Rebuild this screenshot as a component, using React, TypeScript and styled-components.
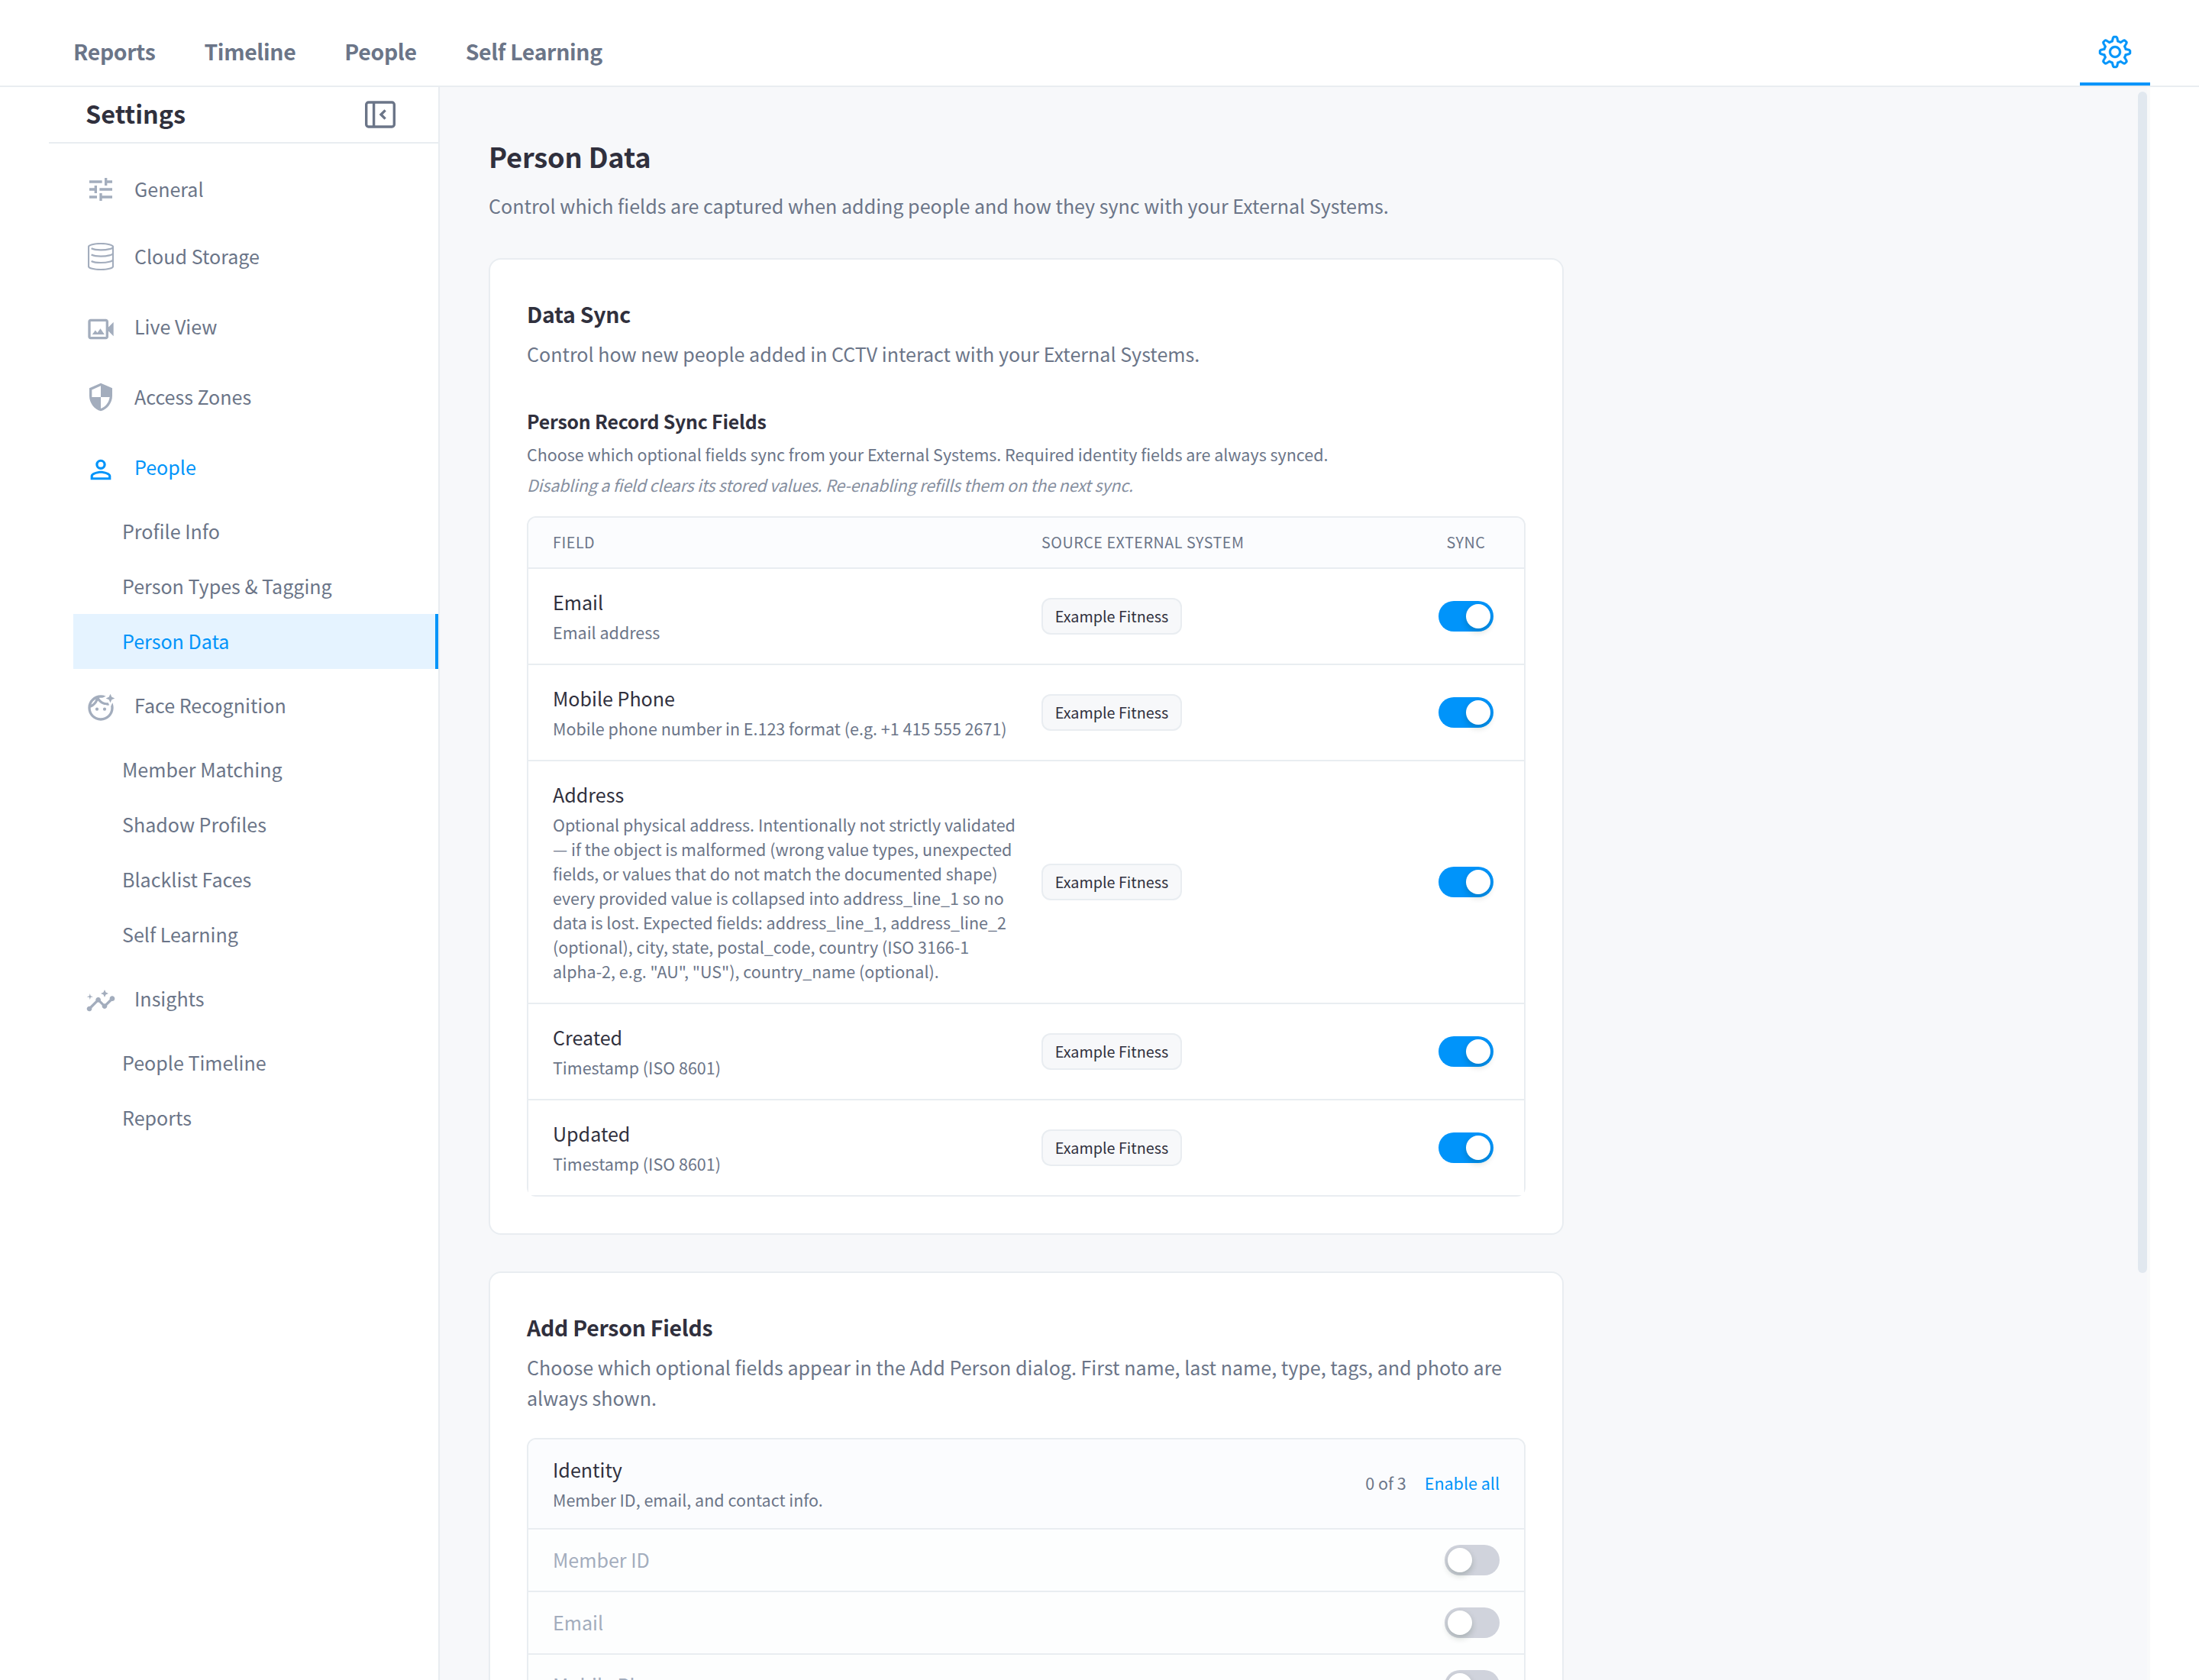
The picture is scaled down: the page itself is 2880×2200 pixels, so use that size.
import { ReactNode, useState } from 'react';
import styled, { createGlobalStyle, css } from 'styled-components'
import {
  MdInsights,
  MdOutlineFaceRetouchingNatural,
  MdPersonOutline,
  MdSecurity,
  MdTune,
} from 'react-icons/md'
import { SlSettings } from 'react-icons/sl'

const color = {
  blue: '#0094fa',
  blueLight: '#e5f3ff',
  title: '#30303d',
  text: '#6b7588',
  muted: '#a3adbd',
  border: '#e9edf1',
  page: '#f7f8fa',
  header: '#fbfcfe',
}

const GlobalStyle = createGlobalStyle`
  * {
    box-sizing: border-box;
  }

  body {
    margin: 0;
    background: #fff;
    color: ${color.text};
    font-family: 'Noto Sans CJK SC', 'Noto Sans', sans-serif;
    font-size: 25.07px;
    line-height: 40px;
  }

  h1, h2, h3, p {
    margin: 0;
  }
`

const Page = styled.div`
  display: flex;
  flex-direction: column;
  height: 2200px;
  overflow: hidden;
`

const TopBar = styled.header`
  display: flex;
  flex: none;
  justify-content: space-between;
  height: 114px;
  padding: 0 64px 0 96px;
  border-bottom: 2px solid ${color.border};
`

const TopMenu = styled.nav`
  display: flex;
  align-items: center;
  gap: 64px;
  padding-top: 22px;
`

const TopLink = styled.a`
  font-size: 28.4px;
  font-weight: 700;
  letter-spacing: -0.32px;
  cursor: pointer;
`

const GearTab = styled.a`
  display: flex;
  align-items: center;
  justify-content: center;
  width: 92px;
  padding-top: 28px;
  border-bottom: 4px solid ${color.blue};
  color: ${color.blue};
  font-size: 42px;

  svg {
    stroke-width: 12px;
    overflow: visible;
  }
`

const Body = styled.div`
  display: flex;
  flex: 1;
  min-height: 0;
  padding-right: 64px;
`

const Sidebar = styled.aside`
  flex: none;
  width: 576px;
  border-right: 2px solid ${color.border};
`

const SidebarHeader = styled.div`
  display: flex;
  align-items: center;
  justify-content: space-between;
  height: 74px;
  margin: 0 0 16px 64px;
  padding: 0 56px 0 48px;
  border-bottom: 2px solid ${color.border};
`

const SidebarTitle = styled.h2`
  padding-bottom: 4px;
  color: ${color.title};
  font-size: 32.4px;
  font-weight: 700;
`

const SideMenu = styled.nav`
  display: flex;
  flex-direction: column;
  margin-left: 96px;
`

const SideItem = styled.a<{ $tall?: boolean; $active?: boolean }>`
  display: flex;
  align-items: center;
  gap: 24px;
  height: ${({ $tall }) => ($tall ? 96 : 88)}px;
  padding-left: 16px;
  color: ${({ $active }) => ($active ? color.blue : color.text)};
  cursor: pointer;

  svg {
    margin-top: ${({ $tall }) => ($tall ? 5 : 0)}px;
    color: ${({ $active }) => ($active ? color.blue : color.muted)};
  }
`

const ItemIcon = styled.span`
  display: flex;
  justify-content: center;
  width: 40px;
  font-size: 40px;
`

const ItemLabel = styled.span`
  padding-bottom: 3px;
`

const SubItem = styled.a<{ $active?: boolean }>`
  display: flex;
  align-items: center;
  height: 72px;
  padding: 0 0 3px 64px;
  cursor: pointer;

  ${({ $active }) => $active && css`
    border-right: 4px solid ${color.blue};
    background: ${color.blueLight};
    color: ${color.blue};
  `}
`

const Main = styled.main`
  display: flex;
  flex: 1;
  justify-content: space-between;
  overflow: hidden;
  background: ${color.page};
`

const Content = styled.div`
  width: 1472px;
  padding: 66px 0 0 64px;
`

const ScrollTrack = styled.div`
  flex: none;
  width: 16px;
  padding-top: 6px;
  border-right: 4px solid #f9fafa;
`

const ScrollThumb = styled.div`
  width: 12px;
  height: 1547px;
  border-radius: 6px;
  background: #e1e8ef;
`

const PageTitle = styled.h1`
  color: ${color.title};
  font-size: 36.2px;
  font-weight: 700;
  letter-spacing: -0.15px;
  line-height: 48px;
`

const PageText = styled.p`
  margin: 21px 0 49px;
`

const Card = styled.section`
  width: 1408px;
  margin-bottom: 48px;
  padding: 48px;
  border: 2px solid ${color.border};
  border-radius: 16px;
  background: #fff;
`

const CardTitle = styled.h2`
  padding-top: 1px;
  color: ${color.title};
  font-size: 28.4px;
  font-weight: 700;
  letter-spacing: -0.25px;
  line-height: 44px;
`

const CardText = styled.p`
  margin-top: 10px;
`

const SectionTitle = styled.h3`
  margin-top: 50px;
  color: ${color.title};
  font-size: 24.8px;
  font-weight: 700;
  letter-spacing: -0.18px;
  line-height: 36px;
`

const SectionText = styled.p`
  margin-top: 8px;
  font-size: 21.49px;
  line-height: 36px;
`

const SectionNote = styled.p`
  margin-top: 4px;
  color: #868fa0;
  font-size: 21.49px;
  font-style: italic;
  letter-spacing: -0.2px;
  line-height: 36px;
`

const Table = styled.div<{ $top: number }>`
  margin-top: ${({ $top }) => $top}px;
  border: 2px solid ${color.border};
  border-radius: 12px;
`

const columns = css`
  display: grid;
  grid-template-columns: 608px 1fr 88px;
  column-gap: 32px;
  align-items: center;
  padding-left: 32px;
  padding-right: 32px;
`

const TableHead = styled.div`
  ${columns}
  height: 67px;
  padding-bottom: 1px;
  border-bottom: 2px solid ${color.border};
  border-radius: 10px 10px 0 0;
  background: ${color.header};
  font-size: 19.7px;
  letter-spacing: 0.55px;
  line-height: 32px;
  text-transform: uppercase;

  span:last-child {
    text-align: center;
  }
`

const TableRow = styled.div`
  ${columns}
  background: #fff;

  &:not(:last-child) {
    border-bottom: 2px solid ${color.border};
  }
`

const FieldCell = styled.div`
  padding: 23px 0 25px;
`

const SyncCell = styled.div`
  display: flex;
  justify-content: center;
`

const Name = styled.div`
  color: ${color.title};
`

const Description = styled.div`
  margin-top: 4px;
  font-size: 21.49px;
  line-height: 32px;
`

const Chip = styled.span`
  display: inline-flex;
  align-items: center;
  justify-content: center;
  width: 184px;
  height: 48px;
  padding-bottom: 1px;
  border: 2px solid ${color.border};
  border-radius: 12px;
  background: ${color.page};
  color: ${color.title};
  font-size: 19.75px;
  line-height: 32px;
  white-space: nowrap;
`

const Switch = styled.button<{ $on: boolean }>`
  display: flex;
  justify-content: ${({ $on }) => ($on ? 'flex-end' : 'flex-start')};
  width: 72px;
  height: 40px;
  padding: 4px;
  border: 0;
  border-radius: 20px;
  background: ${({ $on }) => ($on ? color.blue : '#d0d3dc')};
  cursor: pointer;
`

const Knob = styled.span`
  width: 32px;
  height: 32px;
  border-radius: 50%;
  background: #fff;
  box-shadow: 0 4px 8px rgba(0, 35, 11, 0.2);
`

const GroupHead = styled.div`
  display: flex;
  align-items: center;
  justify-content: space-between;
  height: 118px;
  padding: 0 32px 3px;
  border-bottom: 2px solid ${color.border};
  border-radius: 10px 10px 0 0;
  background: ${color.header};
`

const GroupActions = styled.div`
  display: flex;
  gap: 24px;
  font-size: 21.49px;
`

const EnableAll = styled.a`
  color: ${color.blue};
  cursor: pointer;
`

const GroupRow = styled.div`
  display: flex;
  align-items: center;
  justify-content: space-between;
  height: 82px;
  padding: 0 32px;
  border-bottom: 2px solid ${color.border};
  background: #fdfefe;
  color: ${color.muted};
`

const RowLabel = styled.span`
  padding-bottom: 3px;
`

const CollapseIcon = () => (
  <svg width="40" height="36" viewBox="0 0 40 36" fill="none" stroke={color.text} strokeWidth="3.4">
    <rect x="1.7" y="2" width="36.6" height="32" rx="3" />
    <path d="M11.6 2v32" />
    <path d="M26.6 12.4 21 18l5.6 5.6" />
  </svg>
)

const StorageIcon = () => (
  <svg width="34" height="36" viewBox="0 0 34 36" fill="none" stroke="currentColor" strokeWidth="2.2">
    <path d="M1 5.2C1 2.9 8 1 17 1s16 1.9 16 4.2v25.6C33 33.1 26 35 17 35S1 33.1 1 30.8z" />
    <path d="M4.6 7.3C7.5 8.7 12 9.4 17 9.4c9 0 16-1.9 16-4.2" />
    <path d="M4.6 15.5c2.9 1.4 7.4 2.1 12.4 2.1 9 0 16-1.9 16-4.2" />
    <path d="M4.6 23.9c2.9 1.4 7.4 2.1 12.4 2.1 9 0 16-1.9 16-4.2" />
  </svg>
)

const LiveViewIcon = () => (
  <svg width="40" height="40" viewBox="0 0 24 24" fill="currentColor">
    <path d="M18 10.48V6c0-1.1-.9-2-2-2H4c-1.1 0-2 .9-2 2v12c0 1.1.9 2 2 2h12c1.1 0 2-.9 2-2v-4.48l4 3.98v-11l-4 3.98zM16 18H4V6h12v12z" />
    <path d="M5.3 16.2 7.7 12.9l1.6 2 2.4-3.4 3.2 4.7z" />
  </svg>
)

type MenuEntry = {
  label: string
  icon: ReactNode
  tall?: boolean
  children?: string[]
}

const topLinks = ['Reports', 'Timeline', 'People', 'Self Learning']

const menu: MenuEntry[] = [
  { label: 'General', icon: <MdTune /> },
  { label: 'Cloud Storage', icon: <StorageIcon /> },
  { label: 'Live View', icon: <LiveViewIcon />, tall: true },
  { label: 'Access Zones', icon: <MdSecurity /> },
  {
    label: 'People',
    icon: <MdPersonOutline />,
    tall: true,
    children: ['Profile Info', 'Person Types & Tagging', 'Person Data'],
  },
  {
    label: 'Face Recognition',
    icon: <MdOutlineFaceRetouchingNatural />,
    tall: true,
    children: ['Member Matching', 'Shadow Profiles', 'Blacklist Faces', 'Self Learning'],
  },
  {
    label: 'Insights',
    icon: <MdInsights />,
    tall: true,
    children: ['People Timeline', 'Reports'],
  },
]

const syncFields = [
  { name: 'Email', description: 'Email address' },
  { name: 'Mobile Phone', description: 'Mobile phone number in E.123 format (e.g. +1 415 555 2671)' },
  {
    name: 'Address',
    description:
      'Optional physical address. Intentionally not strictly validated — if the object is malformed (wrong value types, unexpected fields, or values that do not match the documented shape) every provided value is collapsed into address_line_1 so no data is lost. Expected fields: address_line_1, address_line_2 (optional), city, state, postal_code, country (ISO 3166-1 alpha-2, e.g. "AU", "US"), country_name (optional).',
  },
  { name: 'Created', description: 'Timestamp (ISO 8601)' },
  { name: 'Updated', description: 'Timestamp (ISO 8601)' },
]

const identityFields = ['Member ID', 'Email', 'Mobile Phone']

const Toggle = ({ initial = false }: { initial?: boolean }) => {
  const [on, setOn] = useState(initial);

  return (
    <Switch type="button" role="switch" aria-checked={on} $on={on} onClick={() => setOn(!on)}>
      <Knob />
    </Switch>
  )
}

const SettingsMenu = () => (
  <Sidebar>
    <SidebarHeader>
      <SidebarTitle>Settings</SidebarTitle>
      <CollapseIcon />
    </SidebarHeader>
    <SideMenu>
      {menu.map(({ label, icon, tall, children }) => (
        <div key={label}>
          <SideItem $tall={tall} $active={label === 'People'}>
            <ItemIcon>{icon}</ItemIcon>
            <ItemLabel>{label}</ItemLabel>
          </SideItem>
          {children?.map(child => (
            <SubItem key={child} $active={child === 'Person Data'}>{child}</SubItem>
          ))}
        </div>
      ))}
    </SideMenu>
  </Sidebar>
)

const DataSync = () => (
  <Card>
    <CardTitle>Data Sync</CardTitle>
    <CardText>Control how new people added in CCTV interact with your External Systems.</CardText>
    <SectionTitle>Person Record Sync Fields</SectionTitle>
    <SectionText>
      Choose which optional fields sync from your External Systems. Required identity fields are always synced.
    </SectionText>
    <SectionNote>
      Disabling a field clears its stored values. Re-enabling refills them on the next sync.
    </SectionNote>
    <Table $top={23}>
      <TableHead>
        <span>Field</span>
        <span>Source External System</span>
        <span>Sync</span>
      </TableHead>
      {syncFields.map(({ name, description }) => (
        <TableRow key={name}>
          <FieldCell>
            <Name>{name}</Name>
            <Description>{description}</Description>
          </FieldCell>
          <div>
            <Chip>Example Fitness</Chip>
          </div>
          <SyncCell>
            <Toggle initial />
          </SyncCell>
        </TableRow>
      ))}
    </Table>
  </Card>
)

const AddPersonFields = () => (
  <Card>
    <CardTitle>Add Person Fields</CardTitle>
    <CardText>
      Choose which optional fields appear in the Add Person dialog. First name, last name, type, tags, and photo are always shown.
    </CardText>
    <Table $top={33}>
      <GroupHead>
        <div>
          <Name>Identity</Name>
          <Description>Member ID, email, and contact info.</Description>
        </div>
        <GroupActions>
          <span>0 of 3</span>
          <EnableAll>Enable all</EnableAll>
        </GroupActions>
      </GroupHead>
      {identityFields.map(field => (
        <GroupRow key={field}>
          <RowLabel>{field}</RowLabel>
          <Toggle />
        </GroupRow>
      ))}
    </Table>
  </Card>
)

const App = () => {
  return (
    <Page>
      <GlobalStyle />
      <TopBar>
        <TopMenu>
          {topLinks.map(link => (
            <TopLink key={link}>{link}</TopLink>
          ))}
        </TopMenu>
        <GearTab>
          <SlSettings />
        </GearTab>
      </TopBar>
      <Body>
        <SettingsMenu />
        <Main>
          <Content>
            <PageTitle>Person Data</PageTitle>
            <PageText>
              Control which fields are captured when adding people and how they sync with your External Systems.
            </PageText>
            <DataSync />
            <AddPersonFields />
          </Content>
          <ScrollTrack>
            <ScrollThumb />
          </ScrollTrack>
        </Main>
      </Body>
    </Page>
  )
}

export default App
